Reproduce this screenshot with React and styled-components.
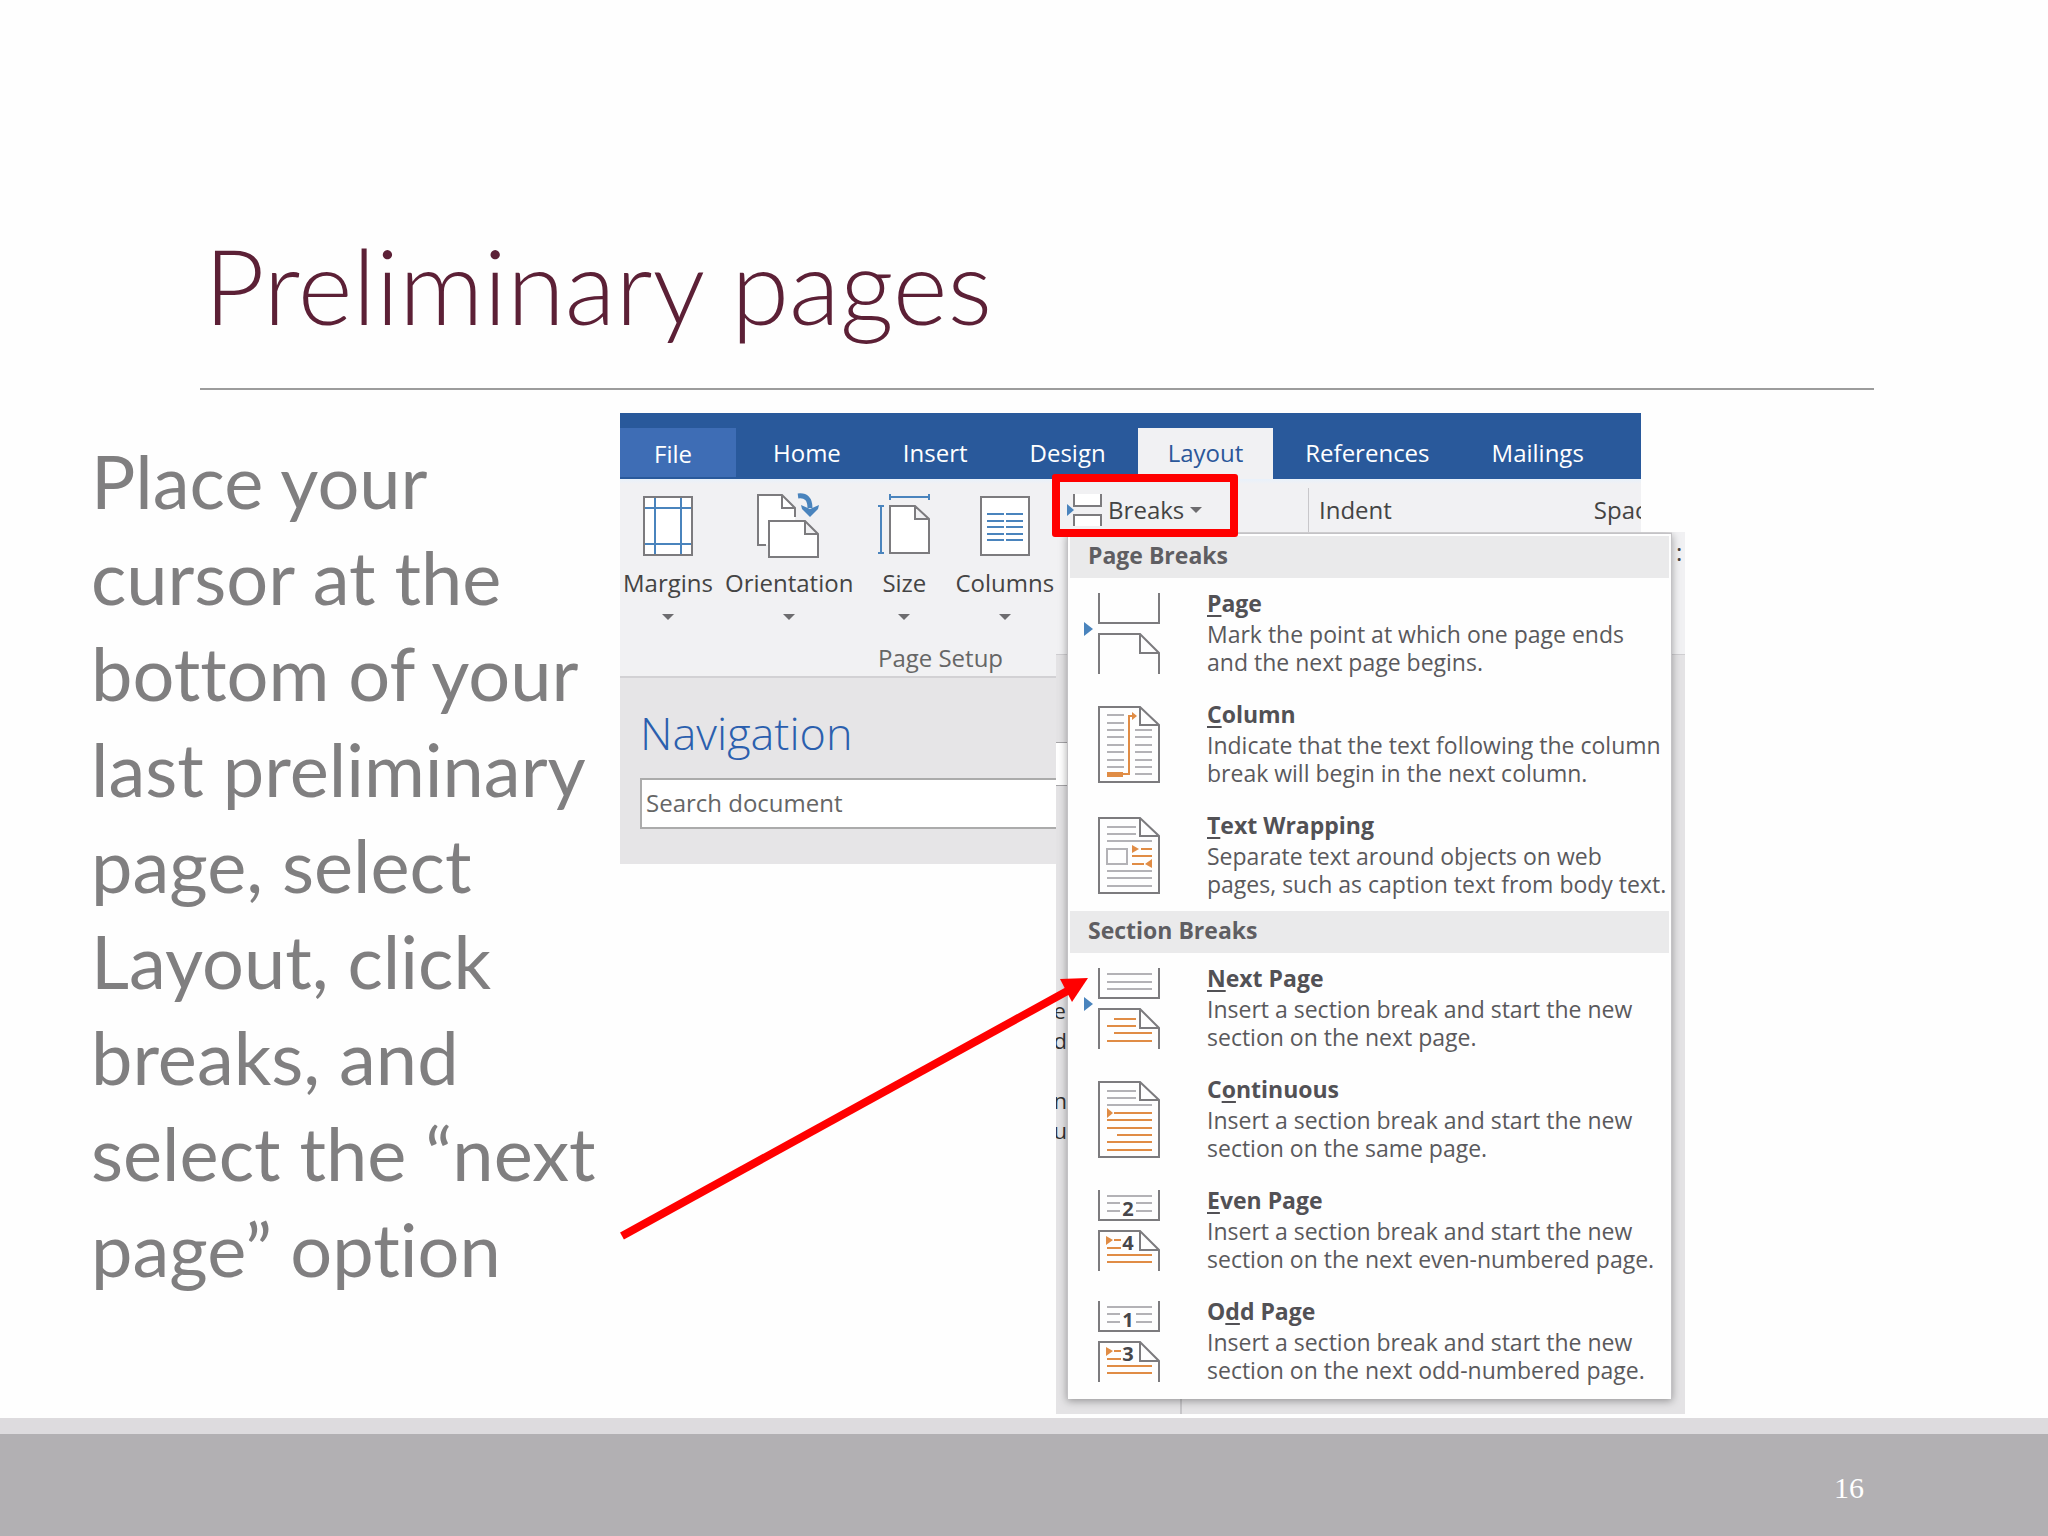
import React, { useState } from "react";
import styled, { createGlobalStyle } from "styled-components";

const OUTLINE = "#7c7b7e";
const LINE = "#b3b2b6";
const ORANGE = "#e08c45";
const BLUE = "#4a84bd";

const tabs = ["Home", "Insert", "Design", "Layout", "References", "Mailings"];

const pageBreaks = [
  {
    icon: "page",
    title: ["", "P", "age"],
    text: "Mark the point at which one page ends\nand the next page begins.",
  },
  {
    icon: "column",
    title: ["", "C", "olumn"],
    text: "Indicate that the text following the column\nbreak will begin in the next column.",
  },
  {
    icon: "wrap",
    title: ["", "T", "ext Wrapping"],
    text: "Separate text around objects on web\npages, such as caption text from body text.",
  },
];

const sectionBreaks = [
  {
    icon: "next",
    title: ["", "N", "ext Page"],
    text: "Insert a section break and start the new\nsection on the next page.",
  },
  {
    icon: "continuous",
    title: ["C", "o", "ntinuous"],
    text: "Insert a section break and start the new\nsection on the same page.",
  },
  {
    icon: "even",
    title: ["", "E", "ven Page"],
    text: "Insert a section break and start the new\nsection on the next even-numbered page.",
  },
  {
    icon: "odd",
    title: ["O", "d", "d Page"],
    text: "Insert a section break and start the new\nsection on the next odd-numbered page.",
  },
];

// Horizontal rules given as [x1, x2, y]
const Lines = ({ rows, color = LINE }) => (
  <path
    d={rows.map(([a, b, y]) => `M${a} ${y}H${b}`).join("")}
    stroke={color}
    strokeWidth="2"
  />
);

const FullPage = () => (
  <path
    d="M16 4H57L76 22V79H16ZM57 4V22H76"
    stroke={OUTLINE}
    strokeWidth="2"
  />
);

const SplitPage = () => (
  <path
    d="M16 1V31H76V1M16 82V42H57L76 61V82M57 42V61H76"
    stroke={OUTLINE}
    strokeWidth="2"
  />
);

const BreakMark = () => <path d="M1 30L10 37L1 44Z" fill={BLUE} />;

const NumberedPages = ({ top, bottom }) => (
  <>
    <SplitPage />
    <Lines
      rows={[
        [24, 69, 7],
        [24, 37, 14],
        [53, 69, 14],
        [24, 37, 22],
        [53, 69, 22],
      ]}
    />
    <Lines
      color={ORANGE}
      rows={[
        [31, 38, 51],
        [24, 38, 59],
        [24, 69, 66],
        [24, 69, 73],
      ]}
    />
    <path d="M23 47L30 51L23 56Z" fill={ORANGE} />
    <IconDigit x="45" y="27">
      {top}
    </IconDigit>
    <IconDigit x="45" y="61">
      {bottom}
    </IconDigit>
  </>
);

const breakIcons = {
  page: (
    <>
      <SplitPage />
      <BreakMark />
    </>
  ),
  column: (
    <>
      <FullPage />
      <Lines
        rows={[
          [24, 41, 12],
          [24, 41, 20],
          [24, 41, 27],
          [24, 41, 34],
          [24, 41, 42],
          [24, 41, 49],
          [24, 41, 57],
          [24, 41, 64],
          [52, 69, 27],
          [52, 69, 34],
          [52, 69, 42],
          [52, 69, 49],
          [52, 69, 57],
          [52, 69, 64],
          [52, 69, 71],
        ]}
      />
      <path d="M39 71H46V13H53" stroke={ORANGE} strokeWidth="2" />
      <path d="M24 69H40V74H24ZM49 9L54 13L49 17Z" fill={ORANGE} />
    </>
  ),
  wrap: (
    <>
      <FullPage />
      <Lines
        rows={[
          [24, 53, 13],
          [24, 53, 20],
          [24, 69, 27],
          [24, 69, 57],
          [24, 69, 64],
          [24, 69, 72],
        ]}
      />
      <rect x="24" y="35" width="20" height="15" stroke={LINE} strokeWidth="2" />
      <Lines
        color={ORANGE}
        rows={[
          [58, 69, 35],
          [49, 69, 42],
          [49, 61, 50],
        ]}
      />
      <path d="M49 31L56 35L49 39ZM69 45L62 50L69 54Z" fill={ORANGE} />
    </>
  ),
  next: (
    <>
      <SplitPage />
      <BreakMark />
      <Lines
        rows={[
          [24, 69, 7],
          [24, 69, 15],
          [24, 69, 22],
        ]}
      />
      <Lines
        color={ORANGE}
        rows={[
          [31, 53, 52],
          [24, 53, 59],
          [31, 69, 66],
          [24, 69, 74],
        ]}
      />
    </>
  ),
  continuous: (
    <>
      <FullPage />
      <Lines
        rows={[
          [24, 53, 13],
          [24, 53, 20],
          [24, 69, 27],
        ]}
      />
      <Lines
        color={ORANGE}
        rows={[
          [31, 69, 35],
          [24, 69, 42],
          [24, 69, 50],
          [34, 69, 57],
          [24, 69, 64],
          [24, 69, 72],
        ]}
      />
      <path d="M24 30L30 35L24 40Z" fill={ORANGE} />
    </>
  ),
  even: <NumberedPages top="2" bottom="4" />,
  odd: <NumberedPages top="1" bottom="3" />,
};

const Caret = () => (
  <svg width="12" height="6" viewBox="0 0 12 6" aria-hidden="true">
    <path d="M0 0H12L6 6Z" fill="#6d6c6f" />
  </svg>
);

const MarginsIcon = () => (
  <svg width="52" height="68" viewBox="0 0 52 68" fill="none">
    <rect x="2" y="6" width="48" height="58" fill="#fff" stroke={OUTLINE} strokeWidth="2" />
    <path
      d="M13 7V63M39 7V63M3 17H49M3 53H49"
      stroke={BLUE}
      strokeWidth="2"
    />
  </svg>
);

const OrientationIcon = () => (
  <svg width="66" height="68" viewBox="0 0 66 68" fill="none">
    <path d="M2 4H26L39 17V30H13V54H2Z" fill="#fff" />
    <path
      d="M10 54H2V4H26L39 17V26M26 4V17H39"
      stroke={OUTLINE}
      strokeWidth="2"
    />
    <path
      d="M13 30H49L62 43V66H13ZM49 30V43H62"
      fill="#fff"
      stroke={OUTLINE}
      strokeWidth="2"
    />
    <path d="M42 5C50 4 54 8 54 17" stroke={BLUE} strokeWidth="5" />
    <path d="M45 14L54 18L63 14L62 18L54 26L46 18Z" fill={BLUE} />
  </svg>
);

const SizeIcon = () => (
  <svg width="54" height="68" viewBox="0 0 54 68" fill="none">
    <path
      d="M13 6H52M13 3V9M52 3V9M4 15V62M1 15H7M1 62H7"
      stroke={BLUE}
      strokeWidth="2"
    />
    <path
      d="M13 15H38L52 28V62H13ZM38 15V28H52"
      fill="#fff"
      stroke={OUTLINE}
      strokeWidth="2"
    />
  </svg>
);

const ColumnsIcon = () => (
  <svg width="52" height="68" viewBox="0 0 52 68" fill="none">
    <rect x="2" y="6" width="48" height="58" fill="#fff" stroke={OUTLINE} strokeWidth="2" />
    <Lines
      color={BLUE}
      rows={[23, 30, 36, 43, 49].flatMap((y) => [
        [8, 25, y],
        [27, 44, y],
      ])}
    />
  </svg>
);

const BreaksIcon = () => (
  <svg width="36" height="32" viewBox="0 0 36 32" fill="none">
    <path
      d="M8 0V12H35V0M8 32V21H35V32"
      fill="#fff"
      stroke={OUTLINE}
      strokeWidth="2"
    />
    <path d="M1 10L8 16L1 22Z" fill={BLUE} />
  </svg>
);

const bigTools = [
  { label: "Margins", Icon: MarginsIcon },
  { label: "Orientation", Icon: OrientationIcon },
  { label: "Size", Icon: SizeIcon, pad: 12 },
  { label: "Columns", Icon: ColumnsIcon },
];

const MenuSection = ({ heading, items }) => (
  <>
    <MenuHeading>{heading}</MenuHeading>
    {items.map(({ icon, title, text }) => (
      <MenuItem key={icon} type="button">
        <svg width="78" height="84" viewBox="0 0 78 84" fill="none">
          {breakIcons[icon]}
        </svg>
        <ItemText>
          <strong>
            {title[0]}
            <u>{title[1]}</u>
            {title[2]}
          </strong>
          <span>{text}</span>
        </ItemText>
      </MenuItem>
    ))}
  </>
);

const App = () => {
  const [activeTab, setActiveTab] = useState("Layout");

  return (
    <Slide>
      <GlobalStyle />
      <Header>
        <h1>Preliminary pages</h1>
      </Header>

      <Content>
        <Instructions>
          Place your cursor at the bottom of your last preliminary page, select
          Layout, click breaks, and select the “next page” option
        </Instructions>

        <Figure>
          <WordWindow>
            <TabBar>
              <FileTab type="button">File</FileTab>
              {tabs.map((tab) => (
                <Tab
                  key={tab}
                  type="button"
                  $active={tab === activeTab}
                  onClick={() => setActiveTab(tab)}
                >
                  {tab}
                </Tab>
              ))}
            </TabBar>

            <Ribbon>
              <PageSetup>
                <Tools>
                  {bigTools.map(({ label, Icon, pad }) => (
                    <BigTool key={label} type="button" $pad={pad}>
                      <Icon />
                      <span>{label}</span>
                      <Caret />
                    </BigTool>
                  ))}
                  <BreaksTool type="button">
                    <BreaksIcon />
                    <span>Breaks</span>
                    <Caret />
                    <Highlight />
                  </BreaksTool>
                </Tools>
                <GroupName>Page Setup</GroupName>
              </PageSetup>
              <Paragraph>
                <span>Indent</span>
                <span>Spacing</span>
              </Paragraph>
            </Ribbon>

            <Navigation>
              <h2>Navigation</h2>
              <SearchBox
                type="text"
                aria-label="Search document"
                placeholder="Search document"
              />
            </Navigation>
          </WordWindow>

          <Dropdown>
            <Edge>
              <EdgeRibbon />
              <EdgePane />
              <EdgeField />
              <EdgeText>{"e\nd\n\nn\nu"}</EdgeText>
            </Edge>
            <Menu>
              <MenuSection heading="Page Breaks" items={pageBreaks} />
              <MenuSection heading="Section Breaks" items={sectionBreaks} />
            </Menu>
            <Edge>
              <EdgeRibbon>:</EdgeRibbon>
            </Edge>
            <PageCorner />
          </Dropdown>

          <Arrow width="480" height="280" viewBox="0 0 480 280">
            <path d="M5 269L454 22" stroke="#f00" strokeWidth="8" />
            <path d="M471 11L443 12L455 35Z" fill="#f00" />
          </Arrow>
        </Figure>
      </Content>

      <Footer>16</Footer>
    </Slide>
  );
};

const GlobalStyle = createGlobalStyle`
  * {
    box-sizing: border-box;
  }

  body {
    margin: 0;
    background: #fefefe;
  }

  button {
    border: 0;
    padding: 0;
    background: none;
    color: inherit;
    font: inherit;
    text-align: left;
    cursor: pointer;
  }

  h1, h2, p {
    margin: 0;
  }

  svg {
    display: block;
    flex: none;
  }
`;

const Slide = styled.main`
  display: flex;
  flex-direction: column;
  min-height: 100vh;
`;

const Header = styled.header`
  margin: 0 174px 23px 200px;
  padding: 224px 0 44px 4px;
  border-bottom: 2px solid #9c9c9c;

  h1 {
    color: #5c2036;
    font: 300 105px/120px Lato, sans-serif;
  }
`;

const Content = styled.div`
  display: flex;
  align-items: flex-start;
  flex: 1;
`;

const Instructions = styled.p`
  flex: 0 0 620px;
  padding: 20px 16px 0 91px;
  color: #807f80;
  font: 400 74px/96px Lato, sans-serif;
  font-variant-ligatures: none;
`;

const Figure = styled.section`
  position: relative;
  display: grid;
  grid-template-columns: 436px 585px 44px;
  margin-bottom: 4px;
  font: 400 24px/32px "Open Sans", sans-serif;
`;

const WordWindow = styled.div`
  grid-area: 1 / 1 / 2 / 3;
  align-self: start;
  overflow: hidden;
  background: #e6e5e7;
`;

const TabBar = styled.nav`
  display: flex;
  align-items: stretch;
  gap: 2px;
  height: 66px;
  padding-top: 15px;
  background: #29599b;
  color: #fff;
`;

const Tab = styled.button`
  padding: 0 30px 1px;
  background: ${({ $active }) => ($active ? "#f1f1f3" : "none")};
  color: ${({ $active }) => ($active ? "#2b579a" : "#fff")};
`;

const FileTab = styled.button`
  width: 116px;
  margin: 0 5px 2px 0;
  padding: 2px 10px 0 0;
  background: #3e6db5;
  text-align: center;
`;

const Ribbon = styled.div`
  display: flex;
  border-bottom: 2px solid #d2d1d4;
  background: linear-gradient(#e8f1fb, #f1f1f3 5px);
  color: #444;
`;

const PageSetup = styled.div`
  flex: none;
  width: 688px;
  padding: 12px 0 2px 3px;
`;

const Tools = styled.div`
  display: flex;
  align-items: flex-start;
  gap: 12px;
`;

const BigTool = styled.button`
  display: flex;
  flex-direction: column;
  align-items: center;
  padding: 0 ${({ $pad = 0 }) => $pad}px;

  span {
    margin: 8px 0 15px;
  }
`;

const BreaksTool = styled.button`
  position: relative;
  display: flex;
  align-items: center;
  gap: 6px;
  margin-top: 3px;
`;

const Highlight = styled.i`
  position: absolute;
  z-index: 2;
  top: -20px;
  left: -14px;
  width: 186px;
  height: 63px;
  border: 8px solid #f00;
  border-radius: 3px;
`;

const GroupName = styled.div`
  margin-top: 22px;
  padding-right: 50px;
  color: #666;
  text-align: center;
`;

const Paragraph = styled.div`
  display: flex;
  flex: none;
  gap: 202px;
  margin-top: 9px;
  padding: 6px 0 0 10px;
  border-left: 1px solid #c8c7ca;
`;

const Navigation = styled.aside`
  padding: 25px 20px 35px;

  h2 {
    color: #2b5fae;
    font: 300 45px/60px "Open Sans", sans-serif;
  }
`;

const SearchBox = styled.input`
  width: 100%;
  height: 51px;
  margin-top: 15px;
  padding: 0 4px 2px;
  border: 2px solid #ababab;
  background: #fff;
  font: inherit;

  &::placeholder {
    color: #666;
    opacity: 1;
  }
`;

const Dropdown = styled.div`
  grid-area: 1 / 2 / 2 / 4;
  position: relative;
  z-index: 1;
  display: grid;
  grid-template-columns: 11px 605px 13px;
  margin-top: 119px;
  overflow: hidden;
  background: #e4e3e5;
`;

const Edge = styled.div`
  display: flex;
  flex-direction: column;
  overflow: hidden;
`;

const EdgeRibbon = styled.div`
  height: 123px;
  padding: 4px 4px 0;
  border-bottom: 1px solid #cfced1;
  background: #f1f1f3;
  color: #444;
`;

const EdgePane = styled.div`
  height: 88px;
  border-bottom: 1px solid #a5a4a7;
`;

const EdgeField = styled.div`
  height: 43px;
  border-bottom: 1px solid #a5a4a7;
  background: #fff;
`;

const EdgeText = styled.div`
  display: flex;
  justify-content: flex-end;
  padding-top: 209px;
  color: #333;
  font-size: 22px;
  line-height: 30px;
  white-space: pre;
`;

const Menu = styled.div`
  position: relative;
  margin-top: 1px;
  padding: 2px;
  border: 1px solid #c3c2c5;
  border-bottom-width: 0;
  background: #fefefe;
  box-shadow: 0 2px 8px rgba(0, 0, 0, 0.35);
  color: #5a595c;
  font-size: 23px;
`;

const MenuHeading = styled.div`
  padding: 3px 18px 7px;
  background: #eaeaeb;
  color: #5f5e62;
  font-weight: 700;
`;

const MenuItem = styled.button`
  display: flex;
  align-items: center;
  gap: 46px;
  width: 100%;
  height: 111px;
  padding-left: 13px;
`;

const ItemText = styled.span`
  display: flex;
  flex-direction: column;
  height: 90px;
  line-height: 28px;
  white-space: pre;

  strong {
    margin-bottom: 3px;
    color: #525155;
  }

  u {
    text-underline-offset: 3px;
  }
`;

const PageCorner = styled.div`
  grid-column: 1 / -1;
  width: 126px;
  height: 15px;
  border-right: 2px solid #c6c5c8;
`;

const Arrow = styled.svg`
  position: absolute;
  z-index: 3;
  top: 554px;
  left: -3px;
`;

const IconDigit = styled.text`
  fill: #47464a;
  font-size: 20px;
  font-weight: 700;
  text-anchor: middle;
`;

const Footer = styled.footer`
  height: 118px;
  padding: 36px 184px 0;
  border-top: 16px solid #dddbde;
  background: #b2b0b3;
  color: #fff;
  font: 400 30px/36px "Liberation Serif", serif;
  text-align: right;
`;

export default App;
